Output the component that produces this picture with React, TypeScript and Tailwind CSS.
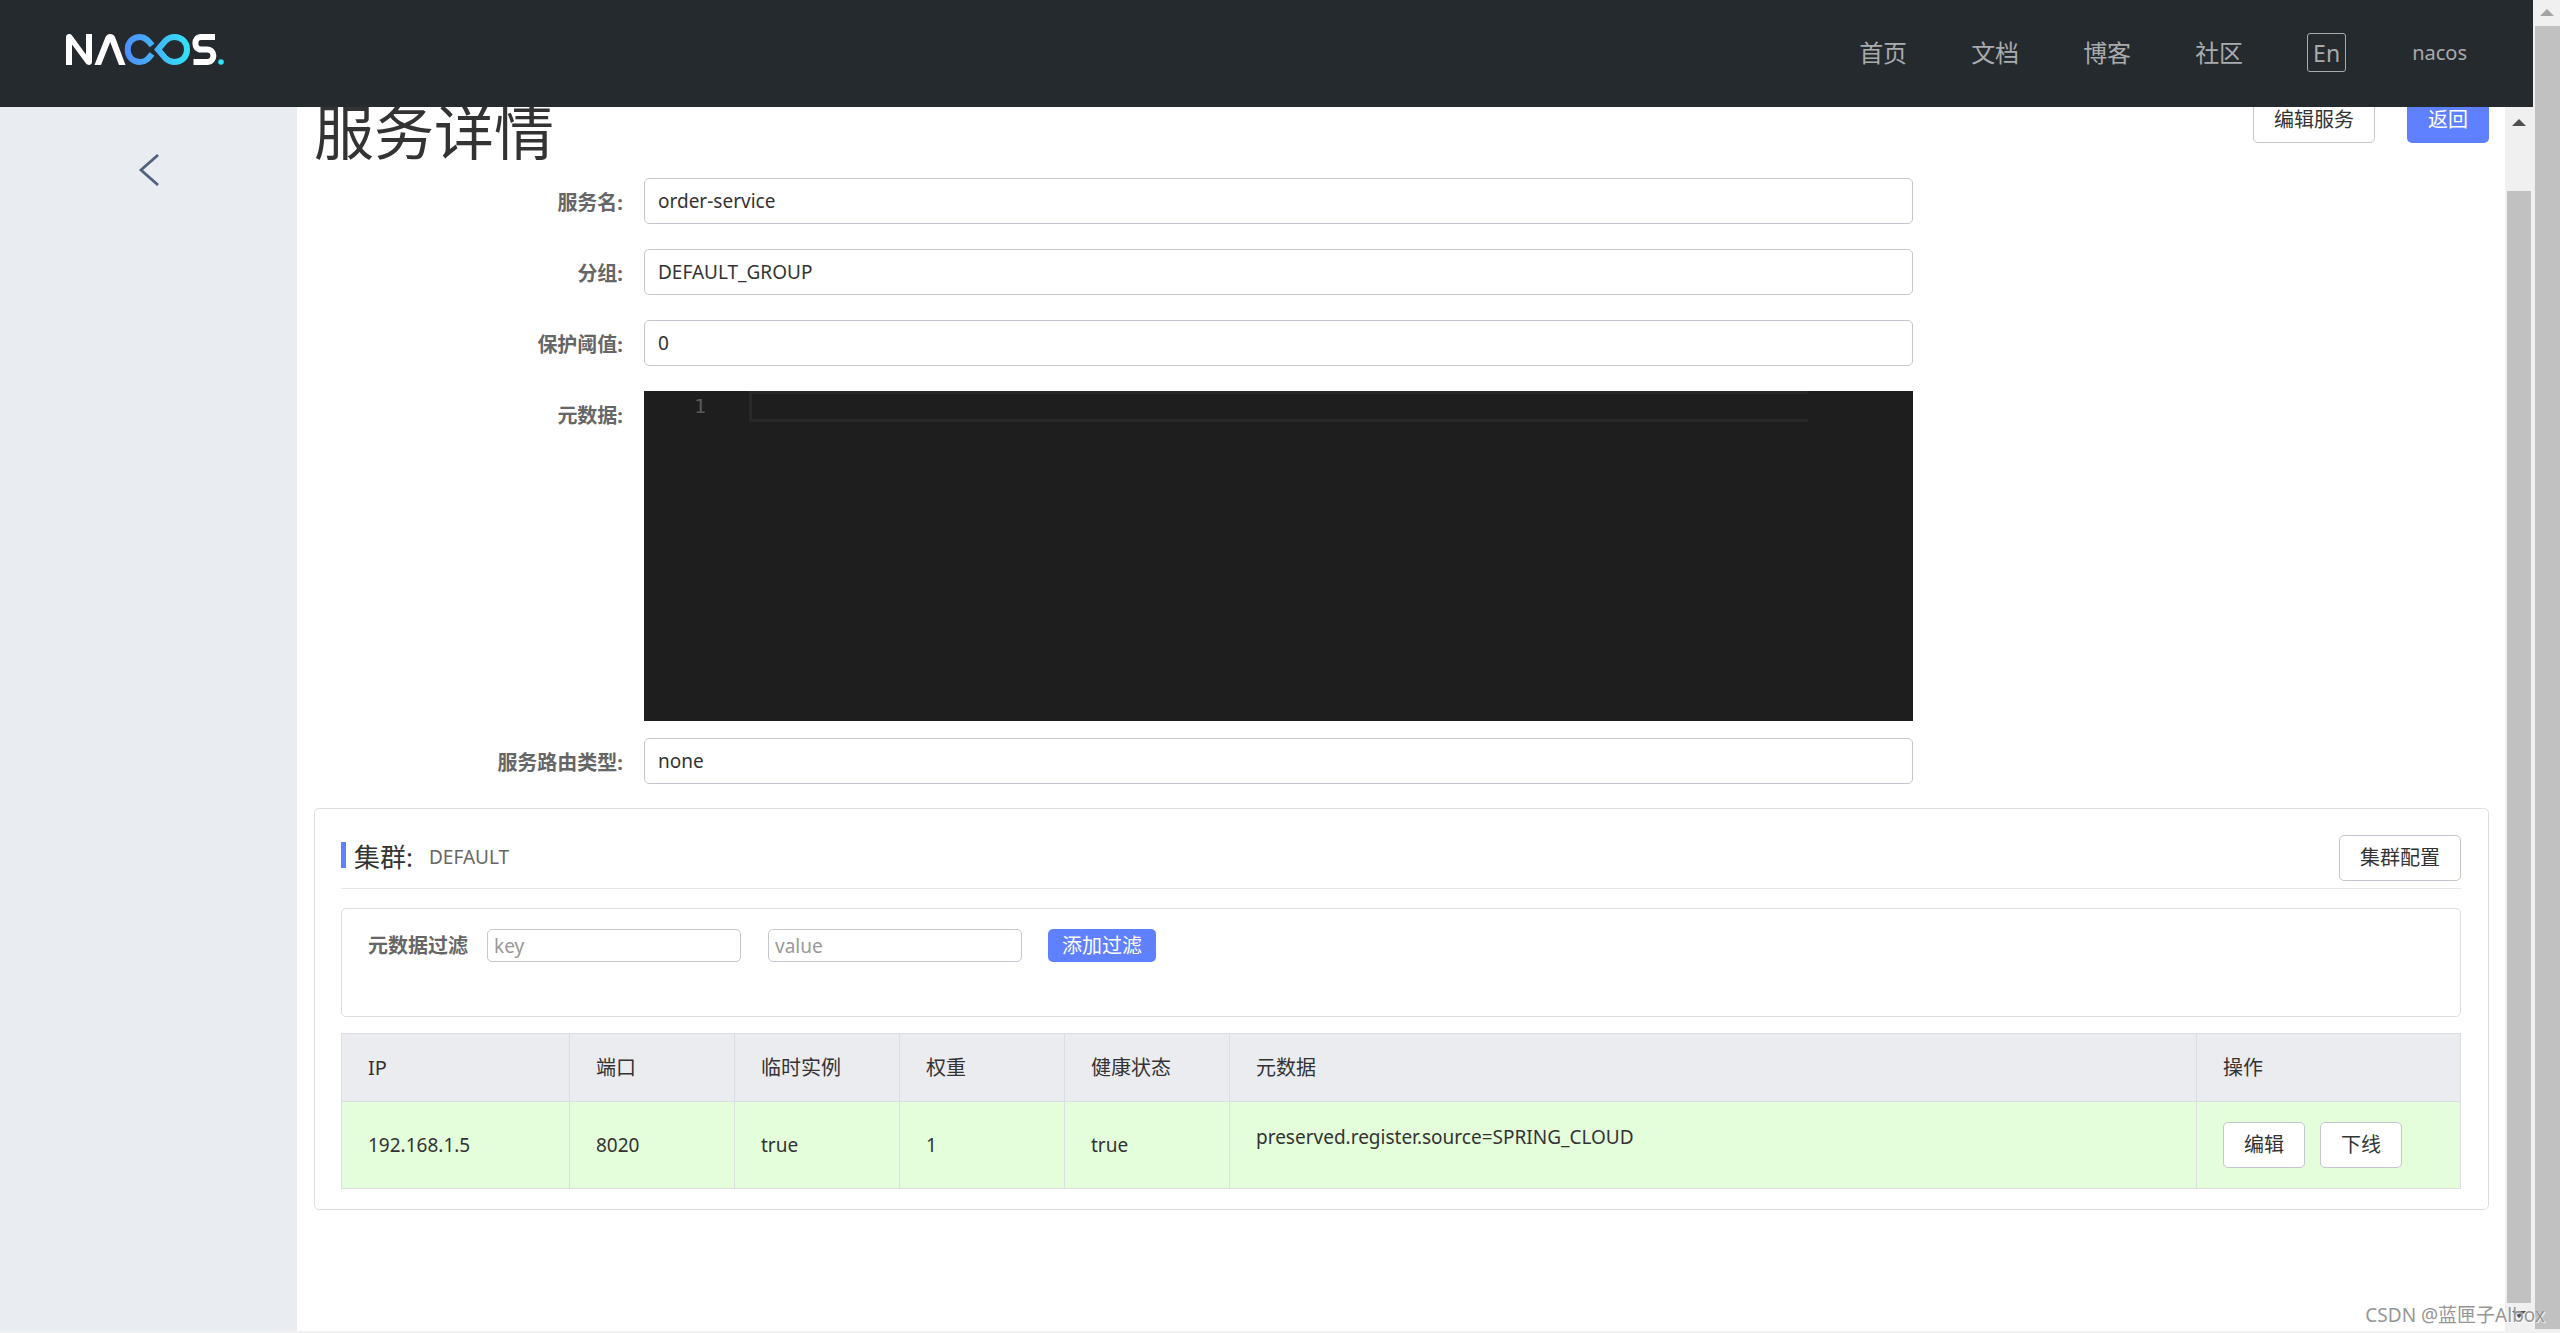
import React from "react";

const navLinks = ["首页", "文档", "博客", "社区"];

const columns = [
  { title: "IP", width: "w-[228px]" },
  { title: "端口", width: "w-[165px]" },
  { title: "临时实例", width: "w-[165px]" },
  { title: "权重", width: "w-[165px]" },
  { title: "健康状态", width: "w-[165px]" },
  { title: "元数据", width: "" },
  { title: "操作", width: "w-[264px]" },
];

function Logo() {
  return (
    <svg viewBox="0 0 158 31" className="h-[31px] w-[158px]" fill="none" role="img" aria-label="Nacos">
      <defs>
        <linearGradient id="loop" x1="58" y1="0" x2="124" y2="0" gradientUnits="userSpaceOnUse">
          <stop offset="0" stopColor="#4e8cff" />
          <stop offset="1" stopColor="#33e3f5" />
        </linearGradient>
      </defs>
      <path
        d="M0 31V3C0 0 4 -1 6 1.500L20 20.500V0H26V28C26 31 22 32 20 29.500L6 10.500V31Z"
        fill="#fff"
      />
      <path
        d="M28.500 31L39.500 3Q41 0 44.200 0Q47.500 0 49 3L59.500 31H53L44.200 8L35 31Z"
        fill="#fff"
      />
      <path
        d="M86 11.500C83 7.500 80 3 74 3C66 3 61.700 8.800 61.700 15.500C61.700 22.200 66 28 74 28C80 28 83 24 86 20"
        stroke="url(#loop)"
        strokeWidth="6"
      />
      <path
        d="M92 15.500L99 7.200C102 4.200 105 3 108.500 3C116.500 3 121 8.800 121 15.500C121 22.200 116.500 28 108.500 28C105 28 102 26.800 99 23.800Z"
        stroke="url(#loop)"
        strokeWidth="6"
      />
      <path
        d="M149 3H135C127.500 3 127.500 15.500 135 15.500H141C149.500 15.500 149.500 28 141 28H127.500"
        stroke="#fff"
        strokeWidth="6"
      />
      <circle cx="155" cy="28" r="2.800" fill="#33e3f5" />
    </svg>
  );
}

function Button({ children }: { children: React.ReactNode }) {
  return (
    <button className="h-[46px] rounded-[5px] border border-[#c4c6cf] bg-white px-5 whitespace-nowrap">
      {children}
    </button>
  );
}

function Field({ id, label, children }: { id: string; label: string; children: React.ReactNode }) {
  return (
    <div className="flex">
      <label htmlFor={id} className="w-[330px] shrink-0 pr-[21px] text-right leading-[50px] font-bold text-[#666]">
        {label}
      </label>
      {children}
    </div>
  );
}

function TextField({ id, label, value }: { id: string; label: string; value: string }) {
  return (
    <Field id={id} label={label}>
      <input
        id={id}
        readOnly
        value={value}
        className="h-[46px] w-7/12 min-w-0 rounded-[5px] border border-[#c4c6cf] bg-white px-[13px] text-[19px]"
      />
    </Field>
  );
}

export default function App() {
  return (
    <div className="flex h-screen overflow-hidden bg-[#f0f0f0] font-['Noto_Sans','Noto_Sans_CJK_SC',sans-serif] text-xl text-[#333]">
      <div className="flex min-w-0 flex-1 flex-col">
        <header className="flex h-[107px] shrink-0 items-center justify-between bg-[#252a2f] pr-[66px] pl-[66px] text-[#a9abad]">
          <a href="#home" className="pb-2">
            <Logo />
          </a>
          <nav className="flex items-center gap-16 pb-0.5 text-2xl">
            {navLinks.map((link) => (
              <a key={link} href="#nav">
                {link}
              </a>
            ))}
            <button className="h-[39px] w-[39px] rounded-[3px] border border-[#a9abad] text-[23px] leading-8">En</button>
            <a href="#user" className="ml-0.5 text-xl">
              nacos
            </a>
          </nav>
        </header>

        <div className="mb-0.5 flex min-h-0 flex-1">
          <aside className="flex w-[297px] shrink-0 justify-center bg-[#e9edf2] pt-[47px]">
            <button aria-label="返回上一页" className="h-8">
              <svg width="22" height="32" viewBox="0 0 22 32" fill="none" stroke="#50617f" strokeWidth="2.800">
                <path d="M20 1L3 16L20 31" />
              </svg>
            </button>
          </aside>

          <main className="min-w-0 flex-1 overflow-hidden bg-white pr-4 pl-[17px]">
            <div className="-mt-5 flex items-start justify-between">
              <h1 className="text-[60px] leading-[91px]">服务详情</h1>
              <div className="flex gap-8 pt-2.5">
                <Button>编辑服务</Button>
                <button className="h-[46px] rounded-[5px] bg-[#5f80ff] px-[21px] text-white">返回</button>
              </div>
            </div>

            <form className="flex flex-col gap-[21px]">
              <TextField id="name" label="服务名:" value="order-service" />
              <TextField id="group" label="分组:" value="DEFAULT_GROUP" />
              <TextField id="threshold" label="保护阈值:" value="0" />
              <Field id="metadata" label="元数据:">
                <div className="-mb-1 flex h-[330px] w-7/12 bg-[#1e1e1e]">
                  <span className="w-[105px] pl-[50px] font-['DejaVu_Sans_Mono',monospace] leading-[31px] text-[#5a5a5a]">1</span>
                  <textarea
                    id="metadata"
                    readOnly
                    className="mr-[105px] h-[31px] flex-1 resize-none overflow-hidden border-[3px] border-r-0 border-[#282828] bg-transparent"
                  />
                </div>
              </Field>
              <TextField id="selector" label="服务路由类型:" value="none" />
            </form>

            <section className="mt-5 rounded-[5px] border border-[#dcdee3] pt-[26px] pr-[27px] pb-5 pl-[26px]">
              <div className="flex items-start justify-between border-b border-[#e6e7eb] pb-[7px]">
                <h2 className="flex items-center pt-1">
                  <span className="mr-2 mb-1 h-[26px] w-[5px] bg-[#5f80ff]" />
                  <span className="text-[26px] leading-9">集群:</span>
                  <span className="ml-4 text-[19px] text-[#666]">DEFAULT</span>
                </h2>
                <Button>集群配置</Button>
              </div>

              <div className="mt-[19px] flex h-[109px] items-start rounded-[5px] border border-[#dcdee3] px-[26px] pt-5">
                <label htmlFor="key" className="mr-[19px] leading-[33px] font-bold text-[#666]">
                  元数据过滤
                </label>
                <input
                  id="key"
                  placeholder="key"
                  className="mr-[27px] h-[33px] w-[254px] rounded-[5px] border border-[#c4c6cf] px-1.5 text-[19px] placeholder:text-[#999]"
                />
                <input
                  aria-label="value"
                  placeholder="value"
                  className="mr-[26px] h-[33px] w-[254px] rounded-[5px] border border-[#c4c6cf] px-1.5 text-[19px] placeholder:text-[#999]"
                />
                <button className="h-[33px] rounded-[5px] bg-[#5f80ff] px-3.5 text-white">添加过滤</button>
              </div>

              <table className="mt-4 w-full table-fixed border-collapse text-left">
                <thead>
                  <tr className="h-[68px] bg-[#ebecf0]">
                    {columns.map((column) => (
                      <th key={column.title} className={`${column.width} border border-[#dcdee3] px-[26px] font-normal`}>
                        {column.title}
                      </th>
                    ))}
                  </tr>
                </thead>
                <tbody>
                  <tr className="h-[87px] bg-[#e4fdda] text-[19px]">
                    {["192.168.1.5", "8020", "true", "1", "true"].map((value, i) => (
                      <td key={i} className="border border-[#dcdee3] px-[26px]">
                        {value}
                      </td>
                    ))}
                    <td className="border border-[#dcdee3] px-[26px] pb-4">preserved.register.source=SPRING_CLOUD</td>
                    <td className="border border-[#dcdee3] px-[26px] text-xl">
                      <div className="flex gap-[15px]">
                        <Button>编辑</Button>
                        <Button>下线</Button>
                      </div>
                    </td>
                  </tr>
                </tbody>
              </table>
            </section>
          </main>

          <div className="flex w-7 shrink-0 flex-col items-center bg-[#f0f0f0] pt-3">
            <svg width="14" height="7" viewBox="0 0 14 7" fill="#505050">
              <path d="M0 7L7 0L14 7Z" />
            </svg>
            <div className="mt-[65px] mb-2 w-6 flex-1 bg-[#c1c1c1]" />
            <svg width="14" height="7" viewBox="0 0 14 7" fill="#505050" className="mb-[13px]">
              <path d="M0 0L7 7L14 0Z" />
            </svg>
          </div>
        </div>
      </div>

      <div className="flex w-[27px] shrink-0 flex-col items-end pt-[9px]">
        <svg width="14" height="7" viewBox="0 0 14 7" fill="#a3a3a3" className="mr-1.5">
          <path d="M0 7L7 0L14 7Z" />
        </svg>
        <div className="mt-2.5 mb-1 w-[25px] flex-1 bg-[#c1c1c1]" />
      </div>

      <div className="absolute right-[15px] bottom-1 text-[19px] text-[#969696] [text-shadow:1px_1px_1px_#fff]">
        CSDN @蓝匣子Albox
      </div>
    </div>
  );
}
